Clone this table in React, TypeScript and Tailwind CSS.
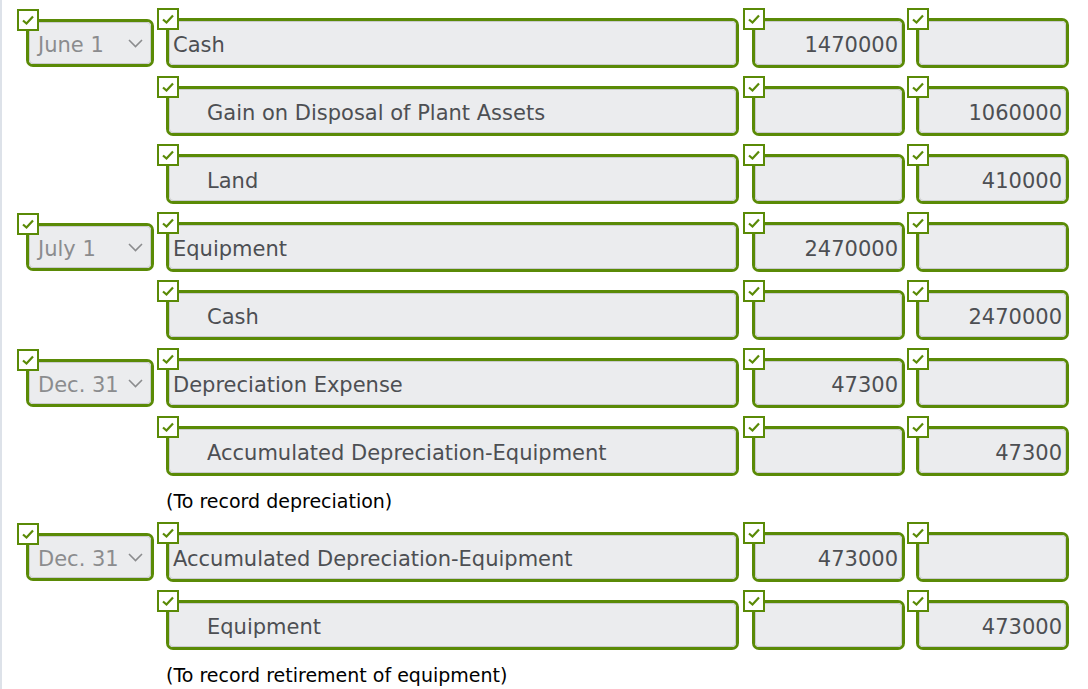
const rows = [
  { date: "June 1", account: "Cash", debit: "1470000", credit: "" },
  { account: "Gain on Disposal of Plant Assets", indent: true, debit: "", credit: "1060000" },
  { account: "Land", indent: true, debit: "", credit: "410000" },
  { date: "July 1", account: "Equipment", debit: "2470000", credit: "" },
  { account: "Cash", indent: true, debit: "", credit: "2470000" },
  { date: "Dec. 31", account: "Depreciation Expense", debit: "47300", credit: "" },
  { account: "Accumulated Depreciation-Equipment", indent: true, debit: "", credit: "47300", note: "(To record depreciation)" },
  { date: "Dec. 31", account: "Accumulated Depreciation-Equipment", debit: "473000", credit: "" },
  { account: "Equipment", indent: true, debit: "", credit: "473000", note: "(To record retirement of equipment)" },
];

function Check() {
  return (
    <div className="absolute -left-[12px] -top-[13px] z-10 flex h-[22px] w-[22px] items-center justify-center border-2 border-[#5a8a06] bg-white">
      <svg width="14" height="12" viewBox="0 0 14 12">
        <path d="M2 6.5 L5.5 9.5 L12 2.5" fill="none" stroke="#5a8a06" strokeWidth="2.2" />
      </svg>
    </div>
  );
}

function Field({ className, children }: { className: string; children?: React.ReactNode }) {
  return (
    <div className={`relative rounded-[7px] border-[3px] border-[#5a8a06] ${className}`}>
      <Check />
      <div className="flex h-full items-center rounded-[4px] border border-[#c9cbcd] bg-[#ebecee] pt-[5px]">{children}</div>
    </div>
  );
}

export default function App() {
  return (
    <div className="min-h-[689px] w-[1088px] border-l-2 border-[#dde2e9] bg-white pl-[24px] text-[21px] text-[#4d4f53]" style={{ fontFamily: '"DejaVu Sans", Verdana, sans-serif' }}>
      {rows.map((r, i) => (
        <div key={i}>
          <div className="flex items-start pt-[18px]">
            <div className="w-[140px] shrink-0 pt-[1px]">
              {r.date && (
                <Field className="h-[48px] w-[128px]">
                  <span className="flex-1 pl-[8px] text-[#8b8c8e]">{r.date}</span>
                  <svg className="relative -top-[2px] mr-[7px]" width="15" height="9" viewBox="0 0 15 9">
                    <path d="M1 1 L7.5 7.5 L14 1" fill="none" stroke="#8b8c8e" strokeWidth="1.6" />
                  </svg>
                </Field>
              )}
            </div>
            <Field className="h-[50px] w-[573px]">
              <span className={r.indent ? "pl-[37px]" : "pl-[3px]"}>{r.account}</span>
            </Field>
            <Field className="ml-[13px] h-[50px] w-[153px]">
              <span className="flex-1 pr-[3px] text-right">{r.debit}</span>
            </Field>
            <Field className="ml-[11px] h-[50px] w-[153px]">
              <span className="flex-1 pr-[3px] text-right">{r.credit}</span>
            </Field>
          </div>
          {r.note && (
            <div className="flex h-[38px] items-end pl-[140px] text-[19px] text-black" style={{ fontFamily: 'Tahoma, "DejaVu Sans", sans-serif' }}>
              <span className="relative top-[1px]">{r.note}</span>
            </div>
          )}
        </div>
      ))}
    </div>
  );
}
